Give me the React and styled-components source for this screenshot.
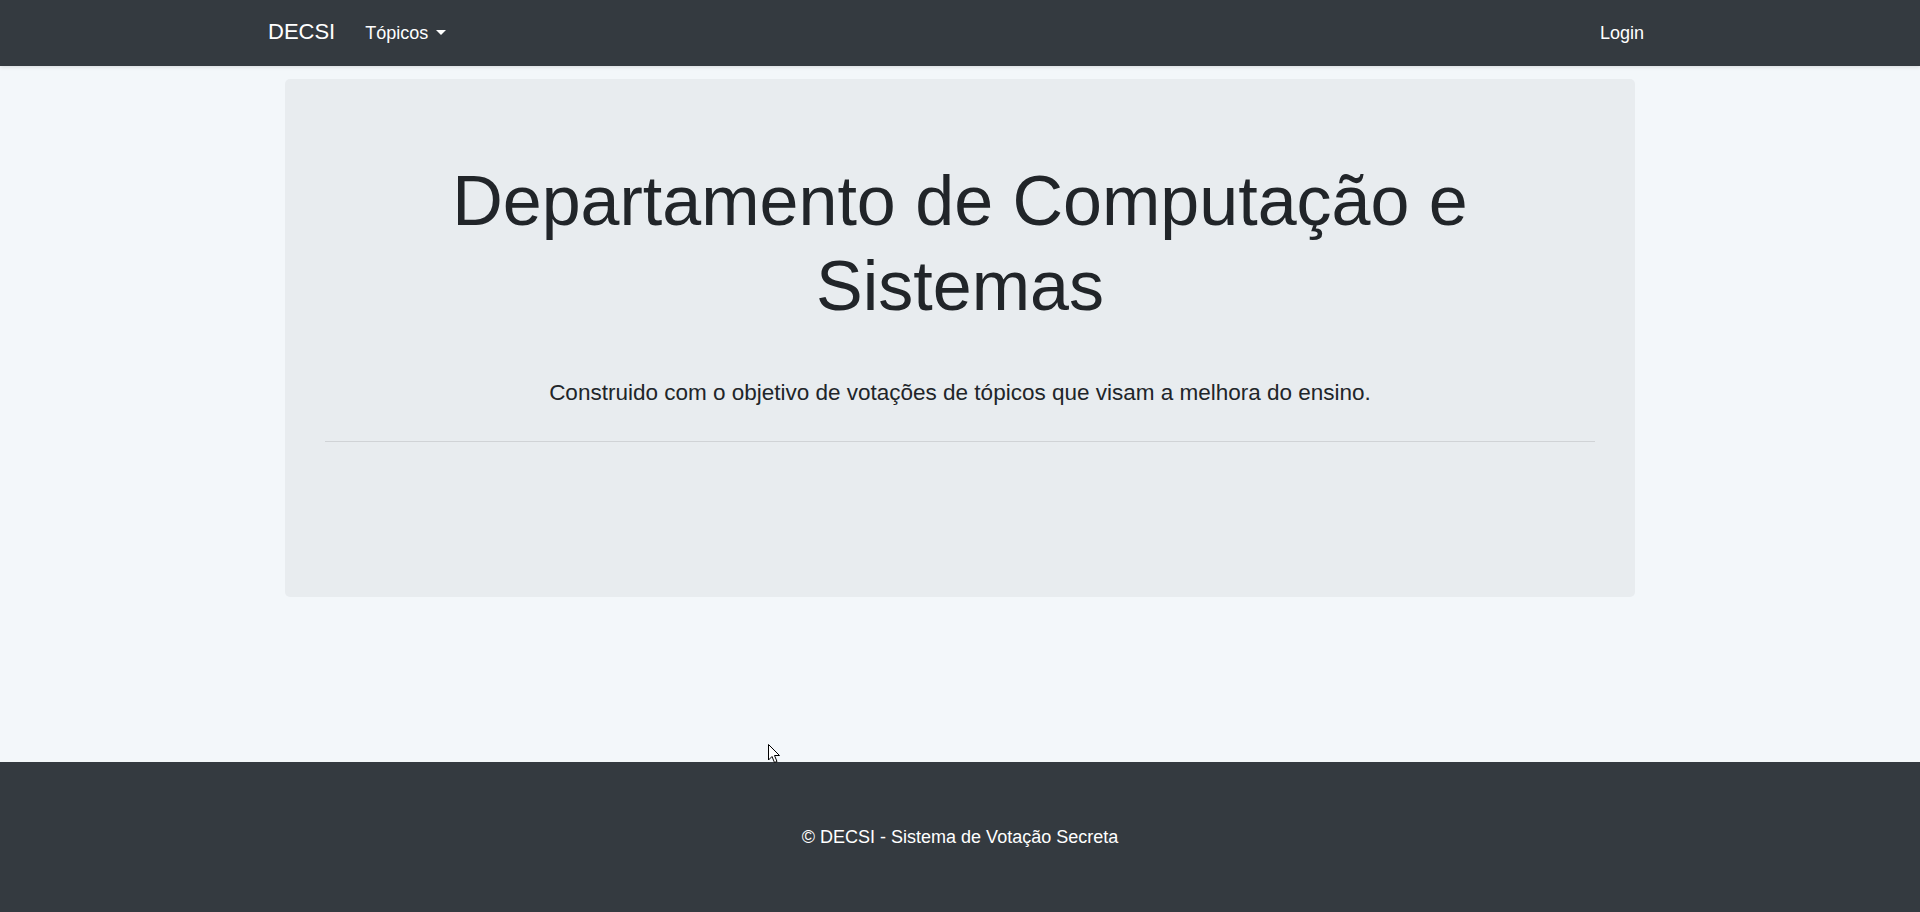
import React from "react";
import styled, { createGlobalStyle } from "styled-components";

const Global = createGlobalStyle`
  html, body { margin: 0; padding: 0; }
  body {
    font-family: "Liberation Sans", Arial, sans-serif;
    font-size: 18px;
    line-height: 1.5;
    color: #212529;
    background: #f3f7fa;
  }
  * { box-sizing: border-box; }
`;

const Page = styled.div`
  min-height: 912px;
  display: flex;
  flex-direction: column;
  position: relative;
`;

const Navbar = styled.nav`
  height: 66px;
  background: #343a40;
  box-shadow: 0 1px 4px rgba(0, 0, 0, 0.12);
  display: flex;
  justify-content: center;
  position: relative;
  z-index: 1;
`;

const NavInner = styled.div`
  width: 1414px;
  padding: 0 15px;
  display: flex;
  align-items: center;
`;

const Brand = styled.a`
  color: #fff;
  font-size: 22px;
  line-height: 32px;
  margin-right: 22px;
  margin-top: -3px;
  text-decoration: none;
`;

const NavLink = styled.a`
  color: #fff;
  font-size: 18px;
  padding: 8px;
  text-decoration: none;
  display: flex;
  align-items: center;
  ${(p) => p.$right && "margin-left: auto;"}
`;

const Caret = styled.span`
  display: inline-block;
  margin-left: 8px;
  margin-top: -1px;
  width: 0;
  height: 0;
  border-top: 5px solid #fff;
  border-left: 5px solid transparent;
  border-right: 5px solid transparent;
`;

const Main = styled.main`
  flex: 1;
  display: flex;
  justify-content: center;
  padding-top: 13px;
`;

const Jumbotron = styled.section`
  width: 1350px;
  height: 518px;
  background: #e8ecef;
  border-radius: 5px;
  padding: 80px 40px 0;
  text-align: center;
`;

const Title = styled.h1`
  margin: 0 0 47px;
  font-size: 70px;
  font-weight: 300;
  line-height: 85px;
`;

const Lead = styled.p`
  margin: 0;
  font-size: 22.5px;
  font-weight: 300;
  line-height: 34px;
`;

const Rule = styled.hr`
  margin: 31px 0 0;
  border: 0;
  border-top: 1px solid #d0d3d6;
`;

const Footer = styled.footer`
  height: 150px;
  background: #343a40;
  color: #fff;
  display: flex;
  align-items: center;
  justify-content: center;
  font-size: 18px;
`;

const Cursor = styled.svg`
  position: absolute;
  left: 768px;
  top: 744px;
  z-index: 5;
`;

export default function App() {
  return (
    <Page>
      <Global />
      <Navbar>
        <NavInner>
          <Brand href="#">DECSI</Brand>
          <NavLink href="#">
            Tópicos
            <Caret />
          </NavLink>
          <NavLink href="#" $right>
            Login
          </NavLink>
        </NavInner>
      </Navbar>
      <Main>
        <Jumbotron>
          <Title>Departamento de Computação e Sistemas</Title>
          <Lead>
            Construido com o objetivo de votações de tópicos que visam a melhora do ensino.
          </Lead>
          <Rule />
        </Jumbotron>
      </Main>
      <Footer>© DECSI - Sistema de Votação Secreta</Footer>
      <Cursor width="13" height="20" viewBox="0 0 13 20">
        <path
          d="M0.5 0.5 L0.5 16 L4 12.5 L6.5 18.5 L9 17.5 L6.5 11.5 L11.5 11.5 Z"
          fill="#fff"
          stroke="#000"
          strokeWidth="1"
          strokeLinejoin="miter"
        />
      </Cursor>
    </Page>
  );
}
